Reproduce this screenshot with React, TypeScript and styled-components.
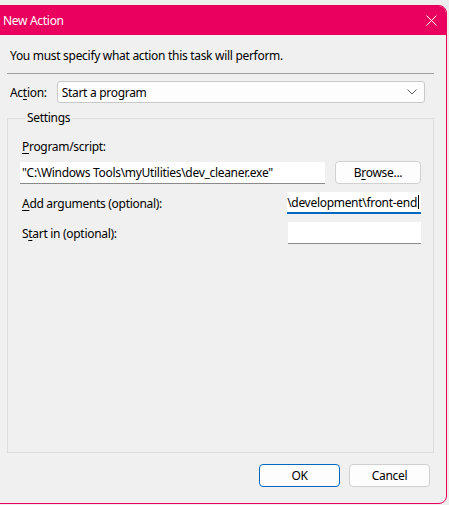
import React from "react";
import styled, { createGlobalStyle } from "styled-components";

const Global = createGlobalStyle`
  html, body { margin: 0; padding: 0; background: #eeeeee; }
  body { font-family: "Noto Sans", "Segoe UI", sans-serif; font-size: 12px; letter-spacing: -0.3px; color: #000; overflow: hidden; }
  #root { width: 449px; height: 505px; }
`;

const Win = styled.div`
  margin-top: 5px;
  margin-left: -1px;
  width: 448px;
  height: 499px;
  box-sizing: border-box;
  border: 1px solid #e8005a;
  border-radius: 0 8px 8px 0;
  background: #f0f0f0;
  display: flex;
  flex-direction: column;
  overflow: hidden;
`;

const TitleBar = styled.div`
  height: 29px;
  background: #ea005e;
  color: #fff;
  display: flex;
  align-items: center;
  justify-content: space-between;
  padding: 0 9px 0 3px;
  flex-shrink: 0;
`;

const Title = styled.span`
  font-size: 12px;
`;

const Body = styled.div`
  flex: 1;
  display: flex;
  flex-direction: column;
  padding: 13px 12px 16px 7px;
`;

const Instruction = styled.div`
  padding-left: 3px;
  line-height: 16px;
  height: 16px;
`;

const Separator = styled.div`
  margin-top: 9px;
  height: 1px;
  background: #a0a0a0;
`;

const ActionRow = styled.div`
  margin-top: 7px;
  display: flex;
  align-items: center;
  padding-left: 3px;
  margin-right: 9px;
`;

const Label = styled.span`
  line-height: 16px;
  white-space: nowrap;
  padding-top: 1px;
`;

const Select = styled.div`
  margin-left: 10px;
  flex: 1;
  height: 22px;
  box-sizing: border-box;
  background: #fdfdfd;
  border: 1px solid #c8c8c8;
  border-radius: 3px;
  display: flex;
  align-items: center;
  justify-content: space-between;
  padding: 0 7px 0 4px;
`;

const Group = styled.fieldset`
  margin: 7px 0 0 0;
  flex: 1;
  border: 1px solid #dcdcdc;
  border-radius: 0;
  padding: 13px 12px 0 12px;
  min-width: 0;
  display: flex;
  flex-direction: column;
`;

const Legend = styled.legend`
  padding: 0 2px;
  margin-left: 5px;
  line-height: 16px;
`;

const FieldLabel = styled.div`
  line-height: 16px;
  padding-left: 2px;
`;

const Row = styled.div<{ $top: number }>`
  margin-top: ${(p) => p.$top}px;
  display: flex;
  align-items: center;
  justify-content: space-between;
`;

const TextBox = styled.div<{ $width: number; $focused?: boolean }>`
  width: ${(p) => p.$width}px;
  height: 22px;
  box-sizing: border-box;
  background: #fff;
  border-bottom: ${(p) => (p.$focused ? "2px solid #0067c0" : "1px solid #8a8a8a")};
  display: flex;
  align-items: center;
  justify-content: ${(p) => (p.$focused ? "flex-end" : "flex-start")};
  padding: 0 2px;
  overflow: hidden;
  white-space: nowrap;
`;

const Value = styled.span`
  flex-shrink: 0;
  display: flex;
  align-items: center;
`;

const Caret = styled.span`
  display: inline-block;
  width: 1px;
  height: 14px;
  background: #000;
  margin-left: 1px;
`;

const Button = styled.button<{ $default?: boolean; $width?: number }>`
  font-family: inherit;
  font-size: 12px;
  letter-spacing: inherit;
  color: #000;
  width: ${(p) => p.$width ?? 81}px;
  height: 23px;
  box-sizing: border-box;
  background: #fdfdfd;
  border: 1px solid ${(p) => (p.$default ? "#0067c0" : "#d0d0d0")};
  border-radius: 4px;
  padding: 0;
  cursor: default;
`;

const Footer = styled.div`
  margin-top: 11px;
  display: flex;
  justify-content: flex-end;
  gap: 9px;
  margin-right: 4px;
`;

const U = styled.span`
  text-decoration: underline;
  text-underline-offset: 2px;
`;

function CloseIcon() {
  return (
    <svg width="11" height="11" viewBox="0 0 11 11">
      <path d="M0.5 0.5 L10.5 10.5 M10.5 0.5 L0.5 10.5" stroke="#fff" strokeWidth="1" />
    </svg>
  );
}

function Chevron() {
  return (
    <svg width="10" height="6" viewBox="0 0 10 6">
      <path d="M0.5 0.5 L5 5 L9.5 0.5" stroke="#5a5a5a" strokeWidth="1" fill="none" />
    </svg>
  );
}

export default function App() {
  return (
    <>
      <Global />
      <Win>
        <TitleBar>
          <Title>New Action</Title>
          <CloseIcon />
        </TitleBar>
        <Body>
          <Instruction>You must specify what action this task will perform.</Instruction>
          <Separator />
          <ActionRow>
            <Label>
              Ac<U>t</U>ion:
            </Label>
            <Select>
              <span>Start a program</span>
              <Chevron />
            </Select>
          </ActionRow>
          <Group>
            <Legend>Settings</Legend>
            <FieldLabel>
              <U>P</U>rogram/script:
            </FieldLabel>
            <Row $top={6}>
              <TextBox $width={305}>"C:\Windows Tools\myUtilities\dev_cleaner.exe"</TextBox>
              <Button type="button" $width={86}>
                B<U>r</U>owse...
              </Button>
            </Row>
            <Row $top={8}>
              <Label style={{ paddingLeft: 2 }}>
                <U>A</U>dd arguments (optional):
              </Label>
              <TextBox $width={134} $focused>
                <Value>
                  \development\front-end
                  <Caret />
                </Value>
              </TextBox>
            </Row>
            <Row $top={8}>
              <Label style={{ paddingLeft: 2 }}>
                S<U>t</U>art in (optional):
              </Label>
              <TextBox $width={133} />
            </Row>
          </Group>
          <Footer>
            <Button type="button" $default>OK</Button>
            <Button type="button">Cancel</Button>
          </Footer>
        </Body>
      </Win>
    </>
  );
}
